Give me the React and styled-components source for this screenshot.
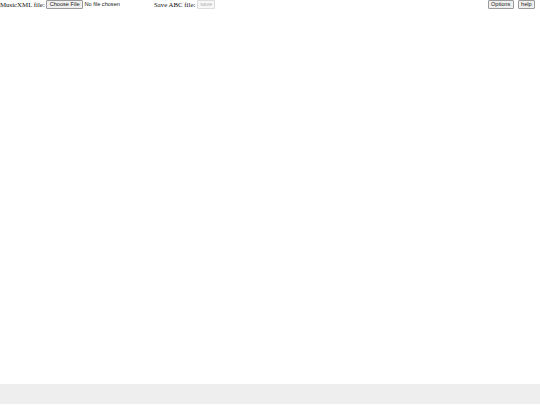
import React from "react";
import styled, { createGlobalStyle } from "styled-components";

const Global = createGlobalStyle`
  html, body { margin: 0; padding: 0; background: #fff; }
  #root { height: 405px; }
`;

const Page = styled.div`
  width: 540px;
  height: 405px;
  display: flex;
  flex-direction: column;
  font-family: "Liberation Serif", "Times New Roman", serif;
`;

const Toolbar = styled.div`
  display: flex;
  align-items: center;
  height: 9px;
  padding-right: 5px;
  font-size: 6.85px;
  line-height: 9px;
  color: #111;
`;

const Group = styled.div`
  display: flex;
  align-items: center;
  gap: ${(p) => p.$gap || 1.5}px;
  margin-left: ${(p) => p.$ml || 0}px;
`;

const Label = styled.span`
  white-space: nowrap;
`;

const Btn = styled.button`
  box-sizing: border-box;
  font-family: "Liberation Sans", Arial, sans-serif;
  font-size: 5.6px;
  line-height: 7px;
  height: 9px;
  padding: 0 2.4px;
  margin: 0;
  border: 1px solid ${(p) => (p.disabled ? "#dcdcdc" : "#9a9a9a")};
  border-radius: 1px;
  background: ${(p) => (p.disabled ? "#f7f7f7" : "#efefef")};
  color: ${(p) => (p.disabled ? "#b4b4b4" : "#222")};
  white-space: nowrap;
`;

const FileText = styled.span`
  font-family: "Liberation Sans", Arial, sans-serif;
  font-size: 5.6px;
  color: #222;
  white-space: nowrap;
`;

const Spacer = styled.div`
  flex: 1;
`;

const Main = styled.div`
  flex: 1;
`;

const Footer = styled.div`
  height: 20px;
  margin-bottom: 1px;
  background: #eeeeee;
`;

export default function App() {
  return (
    <>
      <Global />
      <Page>
        <Toolbar>
          <Group>
            <Label>MusicXML file:</Label>
            <Btn type="button">Choose File</Btn>
            <FileText>No file chosen</FileText>
          </Group>
          <Group $ml={34}>
            <Label>Save ABC file:</Label>
            <Btn type="button" disabled>save</Btn>
          </Group>
          <Spacer />
          <Group $gap={4}>
            <Btn type="button">Options</Btn>
            <Btn type="button">help</Btn>
          </Group>
        </Toolbar>
        <Main />
        <Footer />
      </Page>
    </>
  );
}
